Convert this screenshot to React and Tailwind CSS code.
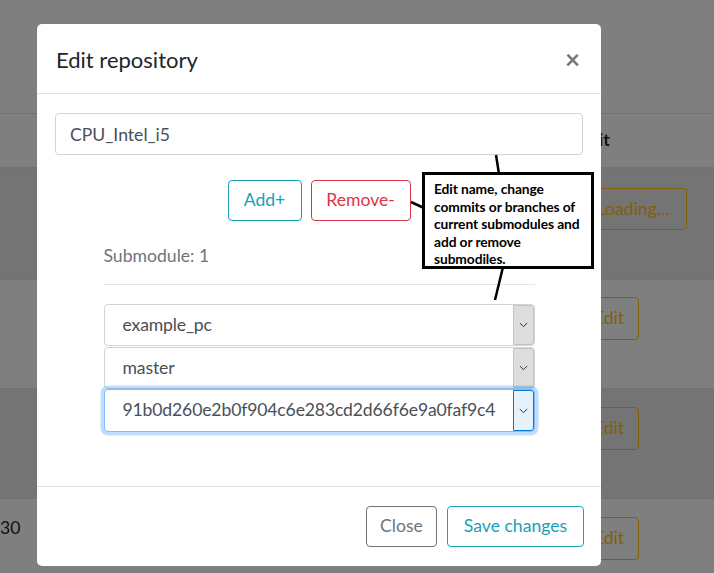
import React from "react";

function Chevron({ className = "" }) {
  return (
    <svg width="9" height="6" viewBox="0 0 9 6" className={className}>
      <polyline points="0.8,1 4.5,4.6 8.2,1" fill="none" stroke="#333" strokeWidth="1" />
    </svg>
  );
}

function Select({ value, focused = false, className = "" }) {
  return (
    <div
      className={
        "relative flex items-center rounded-[4px] border bg-white pl-[18px] text-[17.6px] text-[#495057] " +
        (focused
          ? "border-[#80bdff] shadow-[0_0_0_3.5px_rgba(0,123,255,0.25)] "
          : "border-[#ced4da] ") +
        className
      }
    >
      <span className="whitespace-nowrap tracking-[-0.15px]">{value}</span>
      <div
        className={
          "absolute right-0 top-0 bottom-0 flex w-[21px] items-center justify-center rounded-r-[3px] border " +
          (focused ? "border-[#0078d7] bg-[#e5f1fb]" : "border-[#c4c4c4] bg-[#dddddd]")
        }
      >
        <Chevron />
      </div>
    </div>
  );
}

export default function App() {
  return (
    <div className="relative h-[573px] w-[714px] overflow-hidden bg-white font-['Lato',sans-serif] text-[#212529]">
      {/* underlying page */}
      <div className="h-[113px]" />
      <div className="flex h-[56px] items-center border-t border-b-2 border-[#dee2e6]">
        <div className="flex-1" />
        <div className="w-[147px] pl-[12px] text-[17.6px] font-bold">Edit</div>
      </div>
      <div className="flex h-[111px] border-b border-[#dee2e6] bg-[#e9e9e9] pt-[19px]">
        <div className="flex-1" />
        <div className="w-[148px] pl-[13px]">
          <div className="flex h-[42px] w-[108px] items-center justify-center rounded-[4px] border border-[#ffc107] text-[17.6px] text-[#ffc107]">
            Loading...
          </div>
        </div>
      </div>
      <div className="flex h-[109px] border-b border-[#dee2e6] pt-[17px]">
        <div className="flex-1" />
        <div className="w-[148px] pl-[13px]">
          <div className="flex h-[43px] w-[60px] items-center justify-center rounded-[4px] border border-[#ffc107] text-[17.6px] text-[#ffc107]">
            Edit
          </div>
        </div>
      </div>
      <div className="flex h-[110px] border-b border-[#dee2e6] bg-[#e9e9e9] pt-[18px]">
        <div className="flex-1" />
        <div className="w-[148px] pl-[13px]">
          <div className="flex h-[43px] w-[60px] items-center justify-center rounded-[4px] border border-[#ffc107] text-[17.6px] text-[#ffc107]">
            Edit
          </div>
        </div>
      </div>
      <div className="flex h-[80px] pt-[18px]">
        <div className="mt-[-2px] flex-1 text-[17.6px] leading-[26px]">30</div>
        <div className="w-[148px] pl-[13px]">
          <div className="flex h-[43px] w-[60px] items-center justify-center rounded-[4px] border border-[#ffc107] text-[17.6px] text-[#ffc107]">
            Edit
          </div>
        </div>
      </div>

      {/* backdrop + modal */}
      <div className="absolute inset-0 bg-black/50 pl-[37px] pt-[24px]">
        <div className="w-[564px] rounded-[5px] bg-white">
          <div className="box-border flex h-[70px] items-center justify-between border-b border-[#dee2e6] pl-[19px] pr-[21px]">
            <div className="pt-[2px] text-[22px] leading-[33px] text-[#212529]">Edit repository</div>
            <div className="text-[26px] font-bold leading-none text-[#787878]">×</div>
          </div>
          <div className="px-[18px] pt-[19px] pb-[54px]">
            <input
              readOnly
              value="CPU_Intel_i5"
              className="block h-[42px] w-full rounded-[4px] border border-[#ced4da] px-[14px] text-[17.6px] text-[#495057] outline-none"
            />
            <div className="mt-[25px] flex justify-center gap-[9px]">
              <div className="flex h-[41px] w-[74px] items-center justify-center rounded-[4px] border border-[#17a2b8] text-[17.6px] text-[#17a2b8]">
                Add+
              </div>
              <div className="flex h-[41px] w-[100px] items-center justify-center rounded-[4px] border border-[#dc3545] text-[17.6px] text-[#dc3545]">
                Remove-
              </div>
            </div>
            <div className="mx-auto w-[431px]">
              <div className="mt-[22px] text-[17.6px] leading-[26px] text-[#6c757d]">Submodule: 1</div>
              <div className="mt-[15px] border-t border-[#e5e5e5]" />
              <Select value="example_pc" className="mt-[19px] h-[42px]" />
              <Select value="master" className="mt-px h-[42px]" />
              <Select value="91b0d260e2b0f904c6e283cd2d66f6e9a0faf9c4" focused className="h-[43px]" />
            </div>
          </div>
          <div className="flex justify-end gap-[10px] border-t border-[#dee2e6] px-[17px] pt-[19px] pb-[19px]">
            <div className="flex h-[41px] w-[71px] items-center justify-center rounded-[4px] border border-[#6c757d] text-[17.6px] text-[#6c757d]">
              Close
            </div>
            <div className="flex h-[41px] w-[137px] items-center justify-center rounded-[4px] border border-[#17a2b8] text-[17.6px] text-[#17a2b8]">
              Save changes
            </div>
          </div>
        </div>
      </div>

      {/* annotation callout */}
      <svg className="pointer-events-none absolute inset-0" width="714" height="573">
        <line x1="496" y1="155" x2="499" y2="174" stroke="#000" strokeWidth="2.5" />
        <line x1="503" y1="267" x2="495" y2="300" stroke="#000" strokeWidth="2.5" />
        <line x1="411" y1="202" x2="424" y2="208" stroke="#000" strokeWidth="2.5" />
      </svg>
      <div className="absolute left-[422px] top-[172px] h-[97px] w-[172px] border-[3px] border-black bg-white pl-[9px] pt-[5px] font-['Lato',sans-serif] text-[13.8px] font-bold leading-[17.5px] tracking-[-0.1px] text-black">
        Edit name, change
        <br />
        commits or branches of
        <br />
        current submodules and
        <br />
        add or remove
        <br />
        submodiles.
      </div>
    </div>
  );
}
